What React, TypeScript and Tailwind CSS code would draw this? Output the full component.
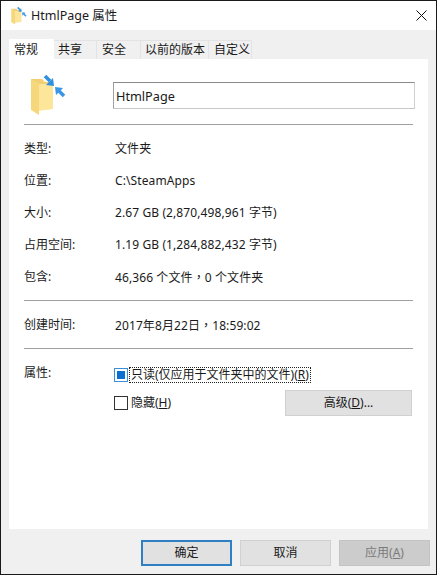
function FolderIcon({ w, h }: { w: number; h: number }) {
  return (
    <svg width={w} height={h} viewBox="0 0 36 41" className="shrink-0">
      <path d="M1 4 H12 L15 7 H23 V34 H1 Z" fill="#f2cf73" />
      <path d="M8 9 H23 V34 L8 36 Z" fill="#fde59a" />
      <path d="M1 4 L9 8 V40 L1 35 Z" fill="#f7d77c" />
      <path d="M15 1 L20 6" stroke="#2f8fe0" strokeWidth="3.5" />
      <path d="M24 11 L23 3 L16 10 Z" fill="#2f8fe0" />
      <path d="M34 21 L29 16" stroke="#3a97e6" strokeWidth="3.5" />
      <path d="M25 12 L33 13 L26 20 Z" fill="#3a97e6" />
    </svg>
  )
}

function Separator() {
  return <div className="h-px bg-[#a0a0a0] ml-[15px] mr-[15px]" />
}

function InfoRow({ label, value }: { label: string; value: React.ReactNode }) {
  return (
    <div className="flex items-center h-8 pl-[15px]">
      <div className="w-[91px]">{label}</div>
      <div className="tracking-[0.1px]">{value}</div>
    </div>
  )
}

function DialogButton({ label, className }: { label: React.ReactNode; className: string }) {
  return (
    <div className={`w-[91px] h-[26px] flex items-center justify-center bg-[#e1e1e1] border ${className}`}>
      {label}
    </div>
  )
}

// the comma sits centred in the reference, which the TC face does
function Comma() {
  return <span className="font-['Noto_Sans_CJK_TC']">，</span>
}

export default function App() {
  const tabs = [
    { label: '共享', w: 'w-[43px] pl-[4px]' },
    { label: '安全', w: 'w-[44px] pl-[5px]' },
    { label: '以前的版本', w: 'w-[68px] pl-[4px]' },
    { label: '自定义', w: 'w-[43px] pl-[5px]' },
  ]

  return (
    <div className="w-[437px] h-[575px] flex flex-col bg-[#f0f0f0] border border-[#1a1a1a] overflow-hidden text-[12px] leading-4 text-[#1a1a1a] font-['Noto_Sans','Noto_Sans_CJK_SC',sans-serif]">
      <div className="h-[29px] shrink-0 bg-white flex items-center pl-[10px] pr-[9px]">
        <FolderIcon w={16} h={18} />
        <span className="ml-[4px] text-[12.5px]">HtmlPage 属性</span>
        <svg width="11" height="11" viewBox="0 0 11 11" className="ml-auto" stroke="#111" strokeWidth="1" fill="none">
          <path d="M0.5 0.5 L10.5 10.5 M10.5 0.5 L0.5 10.5" />
        </svg>
      </div>

      <div className="flex items-end h-[29px] shrink-0 pl-[8px]">
        <div className="w-[45px] h-[21px] bg-white flex items-center pl-[5px] z-10 -mb-px">常规</div>
        {tabs.map(t => (
          <div key={t.label} className={`${t.w} h-[19px] flex items-center bg-[#f0f0f0] border-r border-t border-[#e3e3e3]`}>
            {t.label}
          </div>
        ))}
      </div>

      <div className="ml-[8px] w-[419px] h-[470px] bg-white shrink-0 flex flex-col">
        <div className="flex items-start h-[65px] shrink-0 pt-[16px] pl-[21px]">
          <FolderIcon w={36} h={41} />
          <div className="ml-[47px] mt-[7px] w-[302px] h-[27px] border border-t-[#8a8a8a] border-l-[#a0a0a0] border-b-[#c8c8c8] border-r-[#d0d0d0] flex items-center pl-[2px] text-[12.7px]">
            HtmlPage
          </div>
        </div>
        <Separator />
        <div className="pt-[8px] pb-[7px]">
          <InfoRow label="类型:" value="文件夹" />
          <InfoRow label="位置:" value="C:\SteamApps" />
          <InfoRow label="大小:" value="2.67 GB (2,870,498,961 字节)" />
          <InfoRow label="占用空间:" value="1.19 GB (1,284,882,432 字节)" />
          <InfoRow label="包含:" value={<>46,366 个文件<Comma />0 个文件夹</>} />
        </div>
        <Separator />
        <div className="pt-[8px] pb-[7px]">
          <InfoRow label="创建时间:" value={<>2017年8月22日<Comma />18:59:02</>} />
        </div>
        <Separator />
        <div className="flex pl-[15px] pr-[16px] pt-[16px]">
          <div className="w-[90px]">属性:</div>
          <div className="flex-1">
            <div className="flex items-center h-[18px] mt-[1px]">
              <div className="w-[14px] h-[14px] border border-[#3a8fdc] flex items-center justify-center">
                <div className="w-[8px] h-[8px] bg-[#0a6fd0]" />
              </div>
              <span className="ml-[1px] border border-dotted border-[#222] px-px leading-[14px]">
                只读(仅应用于文件夹中的文件)(<u>R</u>)
              </span>
            </div>
            <div className="flex items-center justify-between mt-[6px]">
              <div className="flex items-center">
                <div className="w-[14px] h-[14px] border border-[#333] bg-white" />
                <span className="ml-[3px]">隐藏(<u>H</u>)</span>
              </div>
              <div className="w-[127px] h-[26px] bg-[#e1e1e1] border border-[#d0d0d0] flex items-center justify-center">
                高级(<u>D</u>)...
              </div>
            </div>
          </div>
        </div>
      </div>

      <div className="flex justify-end gap-2 pt-[11px] pr-[6px]">
        <DialogButton label="确定" className="border-2 border-[#2f7fc4]" />
        <DialogButton label="取消" className="border-[#d0d0d0]" />
        <DialogButton label={<span>应用(<u>A</u>)</span>} className="!bg-[#cccccc] border-[#c4c4c4] text-[#7a7a7a]" />
      </div>
    </div>
  )
}
